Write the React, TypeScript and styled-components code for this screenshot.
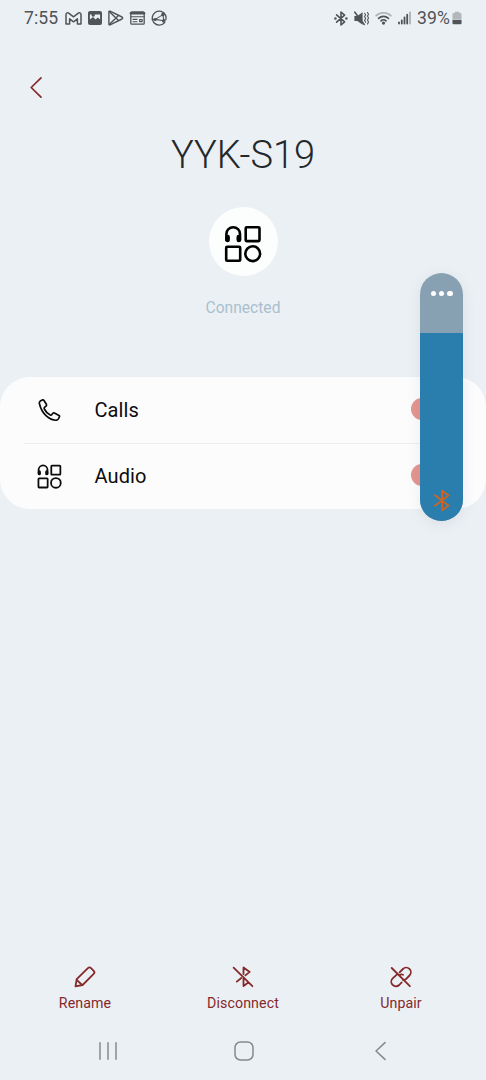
import React from "react";
import styled, { createGlobalStyle } from "styled-components";

const GlobalStyle = createGlobalStyle`
  * { box-sizing: border-box; }
  body {
    margin: 0;
    background: #ebf0f4;
    font-family: Roboto, "Liberation Sans", sans-serif;
  }
`;

const Screen = styled.main`
  position: relative;
  display: flex;
  flex-direction: column;
  width: 486px;
  height: 1080px;
  overflow: hidden;
  background: #ebf0f4;
`;

const StatusBar = styled.header`
  display: flex;
  justify-content: space-between;
  height: 36px;
  padding: 0 24px;
  color: #505357;
`;

const StatusGroup = styled.div<{ $gap: number }>`
  display: flex;
  align-items: center;
  gap: ${(p) => p.$gap}px;
`;

const StatusText = styled.span<{ $spacing?: number }>`
  font-size: 17.6px;
  line-height: 20px;
  letter-spacing: ${(p) => p.$spacing ?? 0}px;
`;

const Glyph = styled.svg<{ $w: number; $h?: number }>`
  display: block;
  flex: none;
  width: ${(p) => p.$w}px;
  height: ${(p) => p.$h ?? p.$w}px;
  overflow: visible;
  fill: none;
  stroke: currentColor;
  stroke-linecap: round;
  stroke-linejoin: round;
`;

const BackButton = styled.button`
  display: flex;
  align-items: center;
  justify-content: center;
  width: 40px;
  height: 40px;
  margin: 31px 0 0 16px;
  padding: 0;
  border: 0;
  background: none;
  color: #85292b;
`;

const DeviceHeader = styled.section`
  display: flex;
  flex-direction: column;
  align-items: center;
  height: 270px;
  padding-top: 23px;
`;

const DeviceName = styled.h1`
  margin: 0;
  font-size: 38px;
  font-weight: 300;
  line-height: 50px;
  letter-spacing: 0;
  color: #25282b;
`;

const DeviceBadge = styled.div`
  display: flex;
  align-items: center;
  justify-content: center;
  width: 69px;
  height: 69px;
  margin-top: 27px;
  padding-top: 5px;
  border-radius: 50%;
  background: #fcfdfd;
  color: #000;
`;

const DeviceState = styled.p`
  margin: 22px 0 0;
  font-size: 15.6px;
  line-height: 20px;
  color: #a9bfcf;
`;

const ProfileList = styled.section`
  height: 132px;
  border-radius: 30px;
  background: #fcfcfd;
`;

const ProfileRow = styled.div`
  display: flex;
  align-items: center;
  height: 66px;
  margin: 0 24px;
  padding: 0 6px 0 13px;
  color: #0c0c0e;

  & + & {
    padding-bottom: 1px;
    border-top: 1px solid #eeeff0;
  }
`;

const ProfileIcon = styled.span`
  display: flex;
  justify-content: center;
  width: 25px;
`;

const ProfileName = styled.span`
  flex: 1;
  margin-left: 32.5px;
  font-size: 20px;
  line-height: 26px;
  letter-spacing: 0.1px;
`;

const Toggle = styled.span`
  width: 45px;
  height: 22px;
  margin-top: -2px;
  border-radius: 11px;
  background: #e5958f;
`;

const VolumeControl = styled.aside`
  position: absolute;
  top: 272.5px;
  left: 420.4px;
  width: 42.6px;
  height: 248.5px;
  border-radius: 22px;
  box-shadow: 0 3px 14px rgba(70, 90, 110, 0.1);
`;

const VolumeTrack = styled.div`
  display: flex;
  flex-direction: column;
  height: 100%;
  border-radius: 22px;
  overflow: hidden;
  background: #87a1b3;
`;

const VolumeMore = styled.div`
  display: flex;
  justify-content: center;
  gap: 3px;
  height: 60.5px;
  padding-top: 18px;
`;

const Dot = styled.i`
  width: 5.4px;
  height: 5.4px;
  border-radius: 50%;
  background: #fff;
`;

const VolumeLevel = styled.div`
  display: flex;
  flex: 1;
  align-items: flex-end;
  justify-content: center;
  padding-bottom: 10px;
  background: #2a7eae;
  color: #d3641f;
`;

const ActionBar = styled.footer`
  display: grid;
  grid-template-columns: repeat(3, 158px);
  justify-content: center;
  margin-top: auto;
  height: 117px;
  padding-top: 2px;
`;

const Action = styled.button`
  display: flex;
  flex-direction: column;
  align-items: center;
  height: 50px;
  gap: 4px;
  padding: 0;
  border: 0;
  background: none;
  color: #85292b;
  font: 400 14.2px/20px Roboto, "Liberation Sans", sans-serif;
  letter-spacing: 0.1px;
`;

const NavBar = styled.nav`
  display: grid;
  grid-template-columns: 136px 136px 136px;
  align-items: center;
  justify-items: center;
  height: 58px;
  margin-top: -58px;
  padding-left: 40px;
  color: #85898d;
`;

const AudioGlyph = ({ size, weight }: { size: number; weight: number }) => (
  <Glyph $w={size} viewBox="0 0 38 38" strokeWidth={weight}>
    <path d="M2.4 15V9a6.8 6.8 0 0 1 13.6 0v6" />
    <path d="M3.6 12v2.9M14.8 12v2.9" strokeWidth={weight + 2} />
    <rect x="21.7" y="2.3" width="13.8" height="13.8" rx="1" />
    <rect x="2.2" y="21.7" width="14" height="14" rx="1" />
    <circle cx="28.7" cy="28.7" r="7.4" />
  </Glyph>
);

const StatusIcons = () => (
  <StatusGroup $gap={6.2}>
    <StatusText $spacing={0.1}>7:55</StatusText>
    <Glyph $w={17} $h={13} viewBox="0 0 17 13" strokeWidth={1.5}>
      <path d="M1 2.6V12h3.6V6.8l3.9 3 3.9-3V12H16V2.6C16 .8 14.3.3 13 1.3L8.5 4.8 4 1.3C2.7.3 1 .8 1 2.6Z" />
    </Glyph>
    <Glyph $w={14} viewBox="0 0 14 14">
      <rect width="14" height="14" rx="2" fill="currentColor" stroke="none" />
      <path d="M1.9 3.4h10.2v5L9.8 6.6 7.6 8.4 5 6 1.9 8.6Z" fill="#ebf0f4" stroke="none" />
      <circle cx="5.2" cy="4" r="1.7" fill="currentColor" stroke="none" />
    </Glyph>
    <Glyph $w={16} viewBox="0 0 16 16" strokeWidth={1.4}>
      <path d="M2 1.2 14 7q1.4 1 0 2L2 14.8q-1.1.2-1.1-1V2.2q0-1.2 1.1-1Z" />
      <path d="m1.3 1.6 9.2 9M1.3 14.4l9.2-9" />
    </Glyph>
    <Glyph $w={15} $h={14} viewBox="0 0 15 14" strokeWidth={1.3}>
      <rect x=".8" y=".8" width="13.4" height="12.4" rx="1" />
      <path d="M1 2.2h13" strokeWidth="2.6" />
      <path d="M1 5.8h13M3 8.4h4M3 10.8h4M9.6 8.6h2.6v2H9.6z" strokeWidth="1.1" />
    </Glyph>
    <Glyph $w={16} viewBox="0 0 16 16" strokeWidth={1.4}>
      <path d="M14.6 5.2A7 7 0 1 0 13.6 12.6M14.6 5.2q.8 2 .3 4.4" />
      <path d="M1.2 9.4h3l7.8-4.8M4.2 9.4l8.6 1.4M12 4.6l.8 6.2" strokeWidth="1.1" />
      <circle cx="12" cy="4.6" r="1.1" fill="currentColor" />
      <circle cx="12.8" cy="10.9" r="1.1" fill="currentColor" />
      <circle cx="4.2" cy="9.4" r=".8" fill="currentColor" />
    </Glyph>
  </StatusGroup>
);

const SystemIcons = () => (
  <StatusGroup $gap={6}>
    <Glyph $w={14} $h={15} viewBox="0 0 14 15" strokeWidth={1.6}>
      <path d="m2.6 3.8 8 7L7 14V1l3.6 3.2-8 7" />
      <circle cx="1.4" cy="7.5" r=".5" fill="currentColor" />
      <circle cx="12.4" cy="7.5" r=".5" fill="currentColor" />
    </Glyph>
    <Glyph $w={15} $h={15} viewBox="0 0 15 15" strokeWidth={1.6}>
      <path d="M.4 5h3L8.6 1.2v12.6L3.4 10h-3Z" fill="currentColor" stroke="none" />
      <path d="m.8 1.2 9.4 12.2" />
      <path d="m10.6 2.3 1 1.5-1 1.8 1 1.8-1 1.8 1 2M13.5 1.5l1 1.8-1 1.8 1 2-1 2 1 1.8-1 2" strokeWidth="1.1" />
    </Glyph>
    <Glyph $w={17} $h={14} viewBox="0 0 18 14" strokeWidth={1.8}>
      <path d="M1.2 4.6a11.2 11.2 0 0 1 15.6 0" opacity=".4" />
      <path d="M3.8 7.4a7.4 7.4 0 0 1 10.4 0M6.4 10a3.7 3.7 0 0 1 5.2 0" />
      <circle cx="9" cy="12.4" r=".8" fill="currentColor" />
    </Glyph>
    <Glyph $w={13} $h={14} viewBox="0 0 13 13" strokeWidth={1.8} strokeLinecap="butt">
      <path d="M1 12v-1.2M3.8 12V8.8M6.5 12V6M9.2 12V3.2" />
      <path d="M12 12V.8" opacity=".4" />
    </Glyph>
    <StatusGroup $gap={2}>
      <StatusText $spacing={0.1}>39%</StatusText>
      <Glyph $w={10} $h={14} viewBox="0 0 11 14">
        <path d="M3 0h5v1.6h1.3q1.2 0 1.2 1.2V9H.5V2.8q0-1.2 1.2-1.2H3Z" fill="#b3b7ba" stroke="none" />
        <path d="M.5 9.2h10v3.3q0 1.3-1.2 1.3H1.7q-1.2 0-1.2-1.3Z" fill="currentColor" stroke="none" />
      </Glyph>
    </StatusGroup>
  </StatusGroup>
);

export default function App() {
  return (
    <>
      <GlobalStyle />
      <Screen>
        <StatusBar>
          <StatusIcons />
          <SystemIcons />
        </StatusBar>

        <BackButton aria-label="Back">
          <Glyph $w={12} $h={21} viewBox="0 0 12 21" strokeWidth={1.7}>
            <path d="M11 .8 1.2 10.5 11 20.2" />
          </Glyph>
        </BackButton>

        <DeviceHeader>
          <DeviceName>YYK-S19</DeviceName>
          <DeviceBadge>
            <AudioGlyph size={38} weight={2.6} />
          </DeviceBadge>
          <DeviceState>Connected</DeviceState>
        </DeviceHeader>

        <ProfileList>
          <ProfileRow>
            <ProfileIcon>
              <Glyph $w={23} viewBox="0 0 23 23" strokeWidth={1.7}>
                <path d="M2.2 2.1 4.4.9q.9-.4 1.4.4l2.6 4q.5.9-.2 1.6L6.5 8.4q-.6.7-.2 1.6 2 4 6 6.1.8.4 1.4-.3l1.2-1.5q.6-.7 1.5-.3l4.6 2.5q.9.5.4 1.4l-1.2 2.2q-.6 1-1.7 1.1-5 .4-10.2-4.3T1.3 4.2q-.1-1.4.9-2.1Z" />
              </Glyph>
            </ProfileIcon>
            <ProfileName>Calls</ProfileName>
            <Toggle />
          </ProfileRow>
          <ProfileRow>
            <ProfileIcon>
              <AudioGlyph size={25} weight={2.7} />
            </ProfileIcon>
            <ProfileName>Audio</ProfileName>
            <Toggle />
          </ProfileRow>
        </ProfileList>

        <VolumeControl>
          <VolumeTrack>
            <VolumeMore>
              <Dot />
              <Dot />
              <Dot />
            </VolumeMore>
            <VolumeLevel>
              <Glyph $w={16} $h={21} viewBox="0 0 16 21" strokeWidth={1.7}>
                <path d="m1 5.2 13.6 10.4-6.4 4.6V.8l6.4 4.6L1 15.8" />
              </Glyph>
            </VolumeLevel>
          </VolumeTrack>
        </VolumeControl>

        <ActionBar>
          <Action>
            <Glyph $w={24} viewBox="0 0 24 24" strokeWidth={1.8}>
              <path d="m2.5 21.4 1.2-7.2L14.9 3.1q1.6-1.5 3.1 0l2.7 2.7q1.5 1.6 0 3.1L9.6 20Z" />
              <path d="m3.7 14.8 5.4 5.2" />
            </Glyph>
            Rename
          </Action>
          <Action>
            <Glyph $w={24} viewBox="0 0 24 24" strokeWidth={1.8}>
              <path d="m2.6 2.7 18.8 18.5M12.5 9V2.4l6.2 4.5-4.3 3.5M12.5 13.6V21l4.8-3.5M5.8 16.6l4.5-3.6" />
            </Glyph>
            Disconnect
          </Action>
          <Action>
            <Glyph $w={24} viewBox="0 0 24 24" strokeWidth={1.8}>
              <path d="m2.7 3 18.2 18.2M10.6 7.3 13.9 4a4.6 4.6 0 0 1 6.6 6.5l-3.8 3.8q-1.1.9-2.5.9M10.8 10q1.4-1.2 3.2-.2M7.5 9.8l-3.8 3.6a4.6 4.6 0 0 0 6.5 6.6l2.5-2.6" />
            </Glyph>
            Unpair
          </Action>
        </ActionBar>

        <NavBar>
          <Glyph $w={18} $h={18} viewBox="0 0 18 18" strokeWidth={1.5}>
            <path d="M1 .8v16.4M9 .8v16.4M17 .8v16.4" />
          </Glyph>
          <Glyph $w={20} viewBox="0 0 20 20" strokeWidth={1.5}>
            <rect x="1" y="1" width="18" height="18" rx="5.5" />
          </Glyph>
          <Glyph $w={11} $h={18} viewBox="0 0 11 18" strokeWidth={1.5}>
            <path d="M10 .6 1 9l9 8.4" />
          </Glyph>
        </NavBar>
      </Screen>
    </>
  );
}
